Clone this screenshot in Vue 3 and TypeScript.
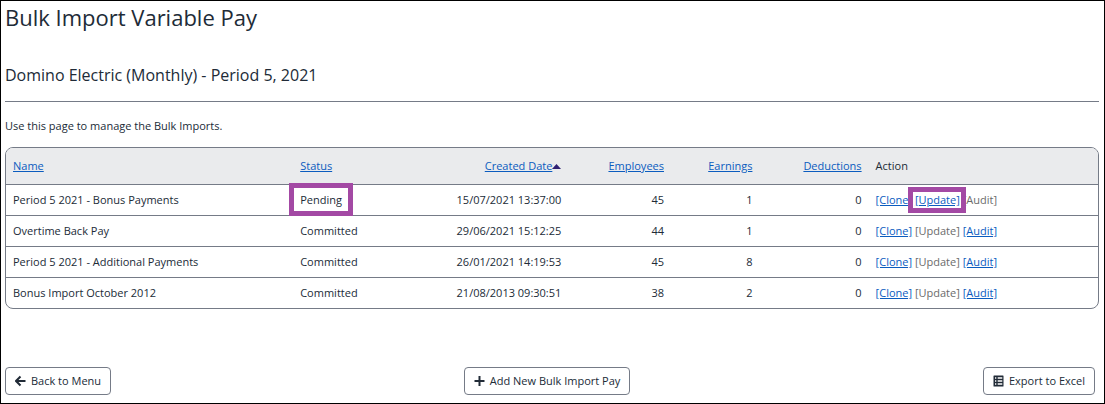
<script setup lang="ts">
interface Action {
  label: string
  enabled: boolean
  marked?: boolean
}

interface BulkImport {
  name: string
  status: string
  created: string
  employees: number
  earnings: number
  deductions: number
  markedStatus?: boolean
  actions: Action[]
}

interface Column {
  key: string
  label: string
  numeric?: boolean
  sortable: boolean
  sorted?: boolean
}

const columns: Column[] = [
  { key: 'name', label: 'Name', sortable: true },
  { key: 'status', label: 'Status', sortable: true },
  { key: 'created', label: 'Created Date', numeric: true, sortable: true, sorted: true },
  { key: 'employees', label: 'Employees', numeric: true, sortable: true },
  { key: 'earnings', label: 'Earnings', numeric: true, sortable: true },
  { key: 'deductions', label: 'Deductions', numeric: true, sortable: true },
  { key: 'action', label: 'Action', sortable: false },
]

const committedActions: Action[] = [
  { label: 'Clone', enabled: true },
  { label: 'Update', enabled: false },
  { label: 'Audit', enabled: true },
]

const rows: BulkImport[] = [
  {
    name: 'Period 5 2021 - Bonus Payments',
    status: 'Pending',
    created: '15/07/2021 13:37:00',
    employees: 45,
    earnings: 1,
    deductions: 0,
    markedStatus: true,
    actions: [
      { label: 'Clone', enabled: true },
      { label: 'Update', enabled: true, marked: true },
      { label: 'Audit', enabled: false },
    ],
  },
  { name: 'Overtime Back Pay', status: 'Committed', created: '29/06/2021 15:12:25', employees: 44, earnings: 1, deductions: 0, actions: committedActions },
  { name: 'Period 5 2021 - Additional Payments', status: 'Committed', created: '26/01/2021 14:19:53', employees: 45, earnings: 8, deductions: 0, actions: committedActions },
  { name: 'Bonus Import October 2012', status: 'Committed', created: '21/08/2013 09:30:51', employees: 38, earnings: 2, deductions: 0, actions: committedActions },
]
</script>

<template>
  <main class="page">
    <h1>Bulk Import Variable Pay</h1>
    <h2>Domino Electric (Monthly) - Period 5, 2021</h2>
    <p class="intro">Use this page to manage the Bulk Imports.</p>

    <div class="table-frame">
      <table>
        <colgroup>
          <col v-for="c in columns" :key="c.key" :class="`col-${c.key}`" />
        </colgroup>
        <thead>
          <tr>
            <th v-for="c in columns" :key="c.key" scope="col" :class="{ num: c.numeric }" :aria-sort="c.sorted ? 'ascending' : undefined">
              <a v-if="c.sortable" href="#">{{ c.label }}</a><template v-else>{{ c.label }}</template><svg v-if="c.sorted" class="sort" viewBox="0 0 9 5" aria-hidden="true"><path d="M0 5 4.5 0 9 5z" /></svg>
            </th>
          </tr>
        </thead>
        <tbody>
          <tr v-for="row in rows" :key="row.name">
            <td>{{ row.name }}</td>
            <td><span :class="{ 'marked marked-status': row.markedStatus }">{{ row.status }}</span></td>
            <td class="num">{{ row.created }}</td>
            <td class="num">{{ row.employees }}</td>
            <td class="num">{{ row.earnings }}</td>
            <td class="num">{{ row.deductions }}</td>
            <td>
              <template v-for="(a, i) in row.actions" :key="a.label">
                {{ i > 0 ? ' ' : '' }}<span :class="{ 'marked marked-action': a.marked }"><a v-if="a.enabled" href="#">[{{ a.label }}]</a><span v-else class="disabled">[{{ a.label }}]</span></span>
              </template>
            </td>
          </tr>
        </tbody>
      </table>
    </div>

    <footer>
      <button type="button">
        <svg viewBox="0 0 11 12" aria-hidden="true"><path class="stroke" d="M10.5 6H1.5M5.500 1.500 1 6l4.500 4.500" /></svg>
        Back to Menu
      </button>
      <button type="button">
        <svg viewBox="0 0 11 12" aria-hidden="true"><path class="stroke" d="M5.500 1v10M.5 6h10" /></svg>
        Add New Bulk Import Pay
      </button>
      <button type="button">
        <svg viewBox="0 0 11 12" aria-hidden="true">
          <path class="fill" fill-rule="evenodd" d="M1 .5h9a.5.5 0 0 1 .5.5v10a.5.5 0 0 1-.5.5H1a.5.5 0 0 1-.5-.5V1A.5.5 0 0 1 1 .5zM2 2.300v1.400h1.300V2.300zM4.700 2.300v1.400H9.300V2.300zM2 5.300v1.400h1.300V5.300zM4.700 5.300v1.400H9.300V5.300zM2 8.300v1.400h1.300V8.300zM4.700 8.300v1.400H9.300V8.300z" />
        </svg>
        Export to Excel
      </button>
    </footer>
  </main>
</template>

<style>
body {
  margin: 0;
  background: #fff;
}
</style>

<style scoped>
.page {
  box-sizing: border-box;
  min-height: 100vh;
  padding: 0 5px 8px 4px;
  border: 1px solid #000;
  font: 11px/16px "Open Sans", "Noto Sans", sans-serif;
  color: #212b37;
}

h1 {
  margin: 0;
  font-size: 22px;
  line-height: 32px;
  font-weight: 400;
}

h2 {
  margin: 30px 0 16px;
  padding-bottom: 14px;
  border-bottom: 1px solid #757b87;
  font-size: 16px;
  line-height: 24px;
  font-weight: 400;
}

.intro {
  margin: 0 0 13px;
}

.table-frame {
  border: 1px solid #757b87;
  border-radius: 8px;
  overflow: hidden;
}

table {
  width: 100%;
  table-layout: fixed;
  border-collapse: separate;
  border-spacing: 0;
}

.col-name {
  width: 26.3%;
}

.col-status {
  width: 10%;
}

.col-created {
  width: 15.2%;
}

.col-employees {
  width: 9.4%;
}

.col-earnings {
  width: 8.1%;
}

.col-deductions {
  width: 10%;
}

th,
td {
  padding: 7px;
  text-align: left;
  white-space: nowrap;
}

th {
  padding: 10px 7px;
  background: #eaebed;
  font-weight: 500;
}

td {
  border-top: 1px solid #757b87;
}

.num {
  text-align: right;
}

a {
  color: #0b5cbf;
  text-decoration: underline;
}

.disabled {
  color: #6b6b6b;
}

.sort {
  width: 9px;
  height: 5px;
  vertical-align: 1px;
  fill: #2f2173;
}

.marked {
  position: relative;
  display: inline-block;
}

.marked::after {
  content: "";
  position: absolute;
  z-index: 1;
  border: 5px solid #a349a4;
  pointer-events: none;
}

.marked-status::after {
  inset: -9px -11px -8px -11px;
}

.marked-action::after {
  inset: -5px -6px -5px -7px;
}

footer {
  display: flex;
  justify-content: space-between;
  margin-top: 58px;
  padding-right: 4px;
}

button {
  display: flex;
  align-items: center;
  gap: 5px;
  padding: 5px 9px;
  border: 1px solid #757b87;
  border-radius: 4px;
  background: #fff;
  color: #212b37;
  font: inherit;
  font-weight: 500;
}

button svg {
  width: 11px;
  height: 12px;
}

.stroke {
  fill: none;
  stroke: currentColor;
  stroke-width: 2;
}

.fill {
  fill: currentColor;
}
</style>
